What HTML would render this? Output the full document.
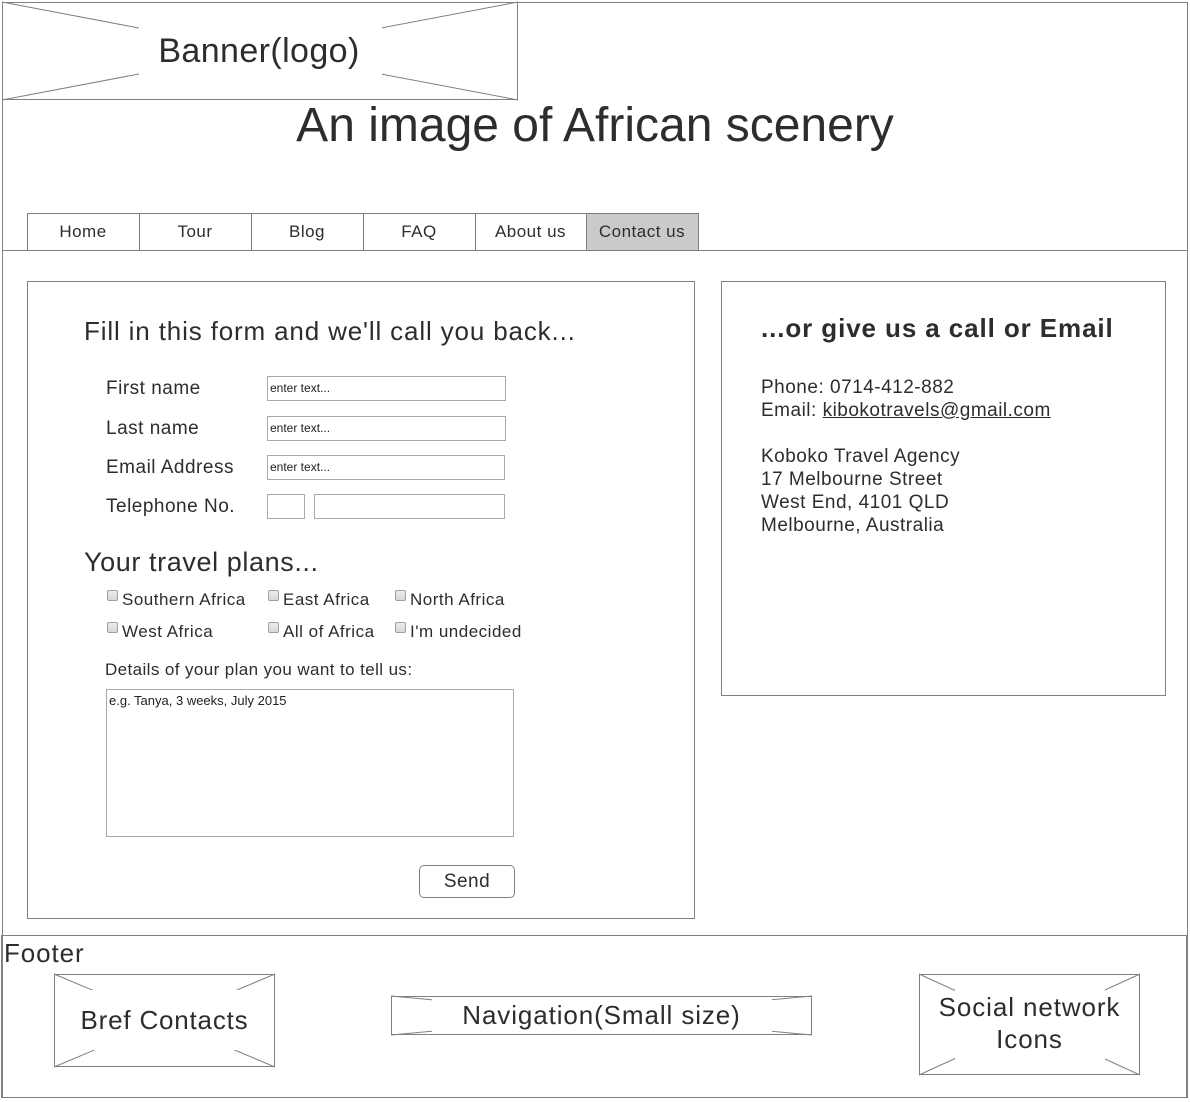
<!DOCTYPE html>
<html><head><meta charset="utf-8">
<style>
html,body{margin:0;padding:0;background:#fff;}
body{width:1190px;height:1102px;position:relative;overflow:hidden;font-family:"Liberation Sans",Arial,sans-serif;color:#2d2d2d;}
.t{position:absolute;white-space:nowrap;line-height:1;}
.box{position:absolute;border:1px solid #808080;box-sizing:border-box;background:#fff;}
.in{position:absolute;border:1px solid #a9a9a9;box-sizing:border-box;background:#fff;font-size:12px;line-height:22px;padding-left:2px;color:#222;}
.cb{position:absolute;width:11px;height:11px;border:1px solid #a0a0a0;border-radius:2px;background:linear-gradient(#ececec,#d8d8d8);box-sizing:border-box;}
.s17{font-size:17px;letter-spacing:0.5px;}
.s19{font-size:19px;letter-spacing:0.5px;}
svg{position:absolute;left:0;top:0;}
</style></head><body>
<svg width="1190" height="1102" viewBox="0 0 1190 1102">
<g fill="none" stroke="#808080" stroke-width="1">
<rect x="2.5" y="2.5" width="1185" height="1095"/>
<line x1="2" y1="250.5" x2="1188" y2="250.5"/>
<rect x="2.5" y="2.5" width="515" height="97"/>
<line x1="2" y1="2" x2="518" y2="100"/><line x1="2" y1="100" x2="518" y2="2"/>
<rect x="27.5" y="281.5" width="667" height="637"/>
<rect x="721.5" y="281.5" width="444" height="414"/>
<rect x="1.5" y="935.5" width="1185" height="162"/>
<rect x="54.5" y="974.5" width="220" height="92"/>
<line x1="54" y1="974" x2="275" y2="1067"/><line x1="54" y1="1067" x2="275" y2="974"/>
<rect x="391.5" y="996.5" width="420" height="38"/>
<line x1="391" y1="996" x2="812" y2="1035"/><line x1="391" y1="1035" x2="812" y2="996"/>
<rect x="919.5" y="974.5" width="220" height="100"/>
<line x1="919" y1="974" x2="1140" y2="1075"/><line x1="919" y1="1075" x2="1140" y2="974"/>
</g>
<g fill="#fff">
<rect x="139" y="22" width="243" height="56"/>
<rect x="76" y="990" width="176" height="60"/>
<rect x="432" y="999" width="340" height="33"/>
<rect x="955" y="986" width="150" height="78"/>
</g>
</svg>
<div class="t" style="left:0;width:518px;text-align:center;top:34px;font-size:34px;letter-spacing:0.4px;">Banner(logo)</div>
<div class="t" style="left:0;width:1190px;text-align:center;top:102px;font-size:48px;">An image of African scenery</div>

<div class="box" style="left:27px;top:213px;width:113px;height:38px;"></div>
<div class="box" style="left:139px;top:213px;width:113px;height:38px;"></div>
<div class="box" style="left:251px;top:213px;width:113px;height:38px;"></div>
<div class="box" style="left:363px;top:213px;width:113px;height:38px;"></div>
<div class="box" style="left:475px;top:213px;width:112px;height:38px;"></div>
<div class="box" style="left:586px;top:213px;width:113px;height:38px;background:#cacaca;"></div>
<div class="t s17" style="left:27px;width:112px;text-align:center;top:223px;">Home</div>
<div class="t s17" style="left:139px;width:112px;text-align:center;top:223px;">Tour</div>
<div class="t s17" style="left:251px;width:112px;text-align:center;top:223px;">Blog</div>
<div class="t s17" style="left:363px;width:112px;text-align:center;top:223px;">FAQ</div>
<div class="t s17" style="left:475px;width:111px;text-align:center;top:223px;">About us</div>
<div class="t s17" style="left:586px;width:112px;text-align:center;top:223px;">Contact us</div>

<div class="t" style="left:84px;top:318px;font-size:26px;letter-spacing:0.85px;">Fill in this form and we'll call you back...</div>
<div class="t s19" style="left:106px;top:379px;">First name</div>
<div class="t s19" style="left:106px;top:419px;">Last name</div>
<div class="t s19" style="left:106px;top:458px;">Email Address</div>
<div class="t s19" style="left:106px;top:497px;">Telephone No.</div>
<div class="in" style="left:267px;top:376px;width:239px;height:25px;">enter text...</div>
<div class="in" style="left:267px;top:416px;width:239px;height:25px;">enter text...</div>
<div class="in" style="left:267px;top:455px;width:238px;height:25px;">enter text...</div>
<div class="in" style="left:267px;top:494px;width:38px;height:25px;"></div>
<div class="in" style="left:314px;top:494px;width:191px;height:25px;"></div>

<div class="t" style="left:84px;top:549px;font-size:27px;letter-spacing:0.6px;">Your travel plans...</div>
<div class="cb" style="left:107px;top:590px;"></div><div class="t s17" style="left:122px;top:591px;">Southern Africa</div>
<div class="cb" style="left:268px;top:590px;"></div><div class="t s17" style="left:283px;top:591px;">East Africa</div>
<div class="cb" style="left:395px;top:590px;"></div><div class="t s17" style="left:410px;top:591px;">North Africa</div>
<div class="cb" style="left:107px;top:622px;"></div><div class="t s17" style="left:122px;top:623px;">West Africa</div>
<div class="cb" style="left:268px;top:622px;"></div><div class="t s17" style="left:283px;top:623px;">All of Africa</div>
<div class="cb" style="left:395px;top:622px;"></div><div class="t s17" style="left:410px;top:623px;">I'm undecided</div>

<div class="t" style="left:105px;top:661px;font-size:17px;letter-spacing:0.4px;">Details of your plan you want to tell us:</div>
<div class="in" style="left:106px;top:689px;width:408px;height:148px;font-size:13px;line-height:21px;padding-left:2px;">e.g. Tanya, 3 weeks, July 2015</div>
<div style="position:absolute;left:419px;top:865px;width:96px;height:33px;border:1px solid #808080;border-radius:5px;box-sizing:border-box;font-size:19px;line-height:31px;text-align:center;letter-spacing:0.5px;">Send</div>

<div class="t" style="left:761px;top:315px;font-size:26px;font-weight:bold;letter-spacing:0.9px;">...or give us a call or Email</div>
<div style="position:absolute;left:761px;top:376px;font-size:19px;line-height:23px;letter-spacing:0.5px;">Phone: 0714-412-882<br>Email: <u>kibokotravels@gmail.com</u><br><br>Koboko Travel Agency<br>17 Melbourne Street<br>West End, 4101 QLD<br>Melbourne, Australia</div>

<div class="t" style="left:4px;top:940px;font-size:26px;letter-spacing:0.9px;">Footer</div>
<div class="t" style="left:54px;width:221px;text-align:center;top:1007px;font-size:26px;letter-spacing:0.8px;">Bref Contacts</div>
<div class="t" style="left:391px;width:421px;text-align:center;top:1002px;font-size:26px;letter-spacing:0.9px;">Navigation(Small size)</div>
<div style="position:absolute;left:919px;width:221px;text-align:center;top:991px;font-size:26px;line-height:32px;letter-spacing:0.9px;">Social network<br>Icons</div>
</body></html>
